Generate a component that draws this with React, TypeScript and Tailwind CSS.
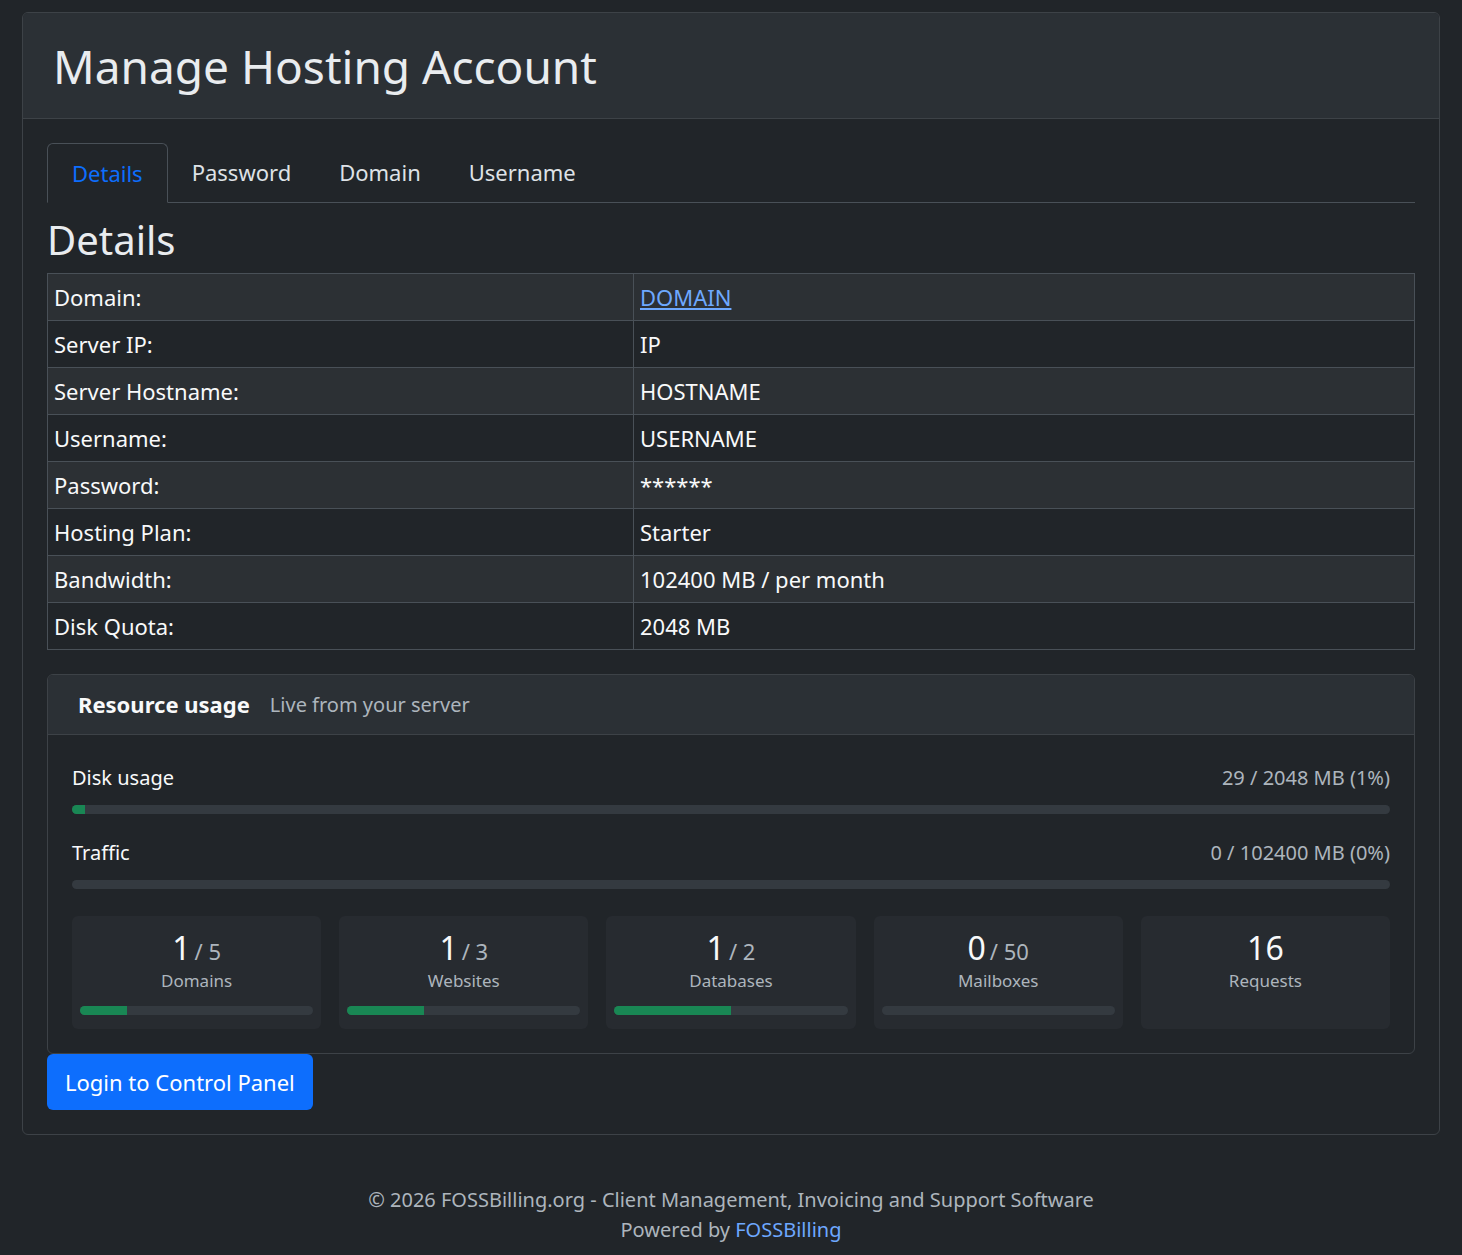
const rows: [string, string][] = [
  ["Domain:", "DOMAIN"],
  ["Server IP:", "IP"],
  ["Server Hostname:", "HOSTNAME"],
  ["Username:", "USERNAME"],
  ["Password:", "******"],
  ["Hosting Plan:", "Starter"],
  ["Bandwidth:", "102400 MB / per month"],
  ["Disk Quota:", "2048 MB"],
];

const stats = [
  { used: "1", total: "/ 5", label: "Domains", pct: 20 },
  { used: "1", total: "/ 3", label: "Websites", pct: 33 },
  { used: "1", total: "/ 2", label: "Databases", pct: 50 },
  { used: "0", total: "/ 50", label: "Mailboxes", pct: 0 },
  { used: "16", total: "", label: "Requests", pct: -1 },
];

const App = () => {
  return (
    <div className="min-h-[1255px] bg-[#212529] text-[#dee2e6] pt-3 pb-4" style={{ fontFamily: '"Noto Sans", "Open Sans", sans-serif' }}>
      <div className="mx-[22px] border border-[#3d4247] rounded-md overflow-hidden">
        <div className="bg-[#2b3035] border-b border-[#3d4247] h-[106px] flex items-center px-[30px]">
          <h1 className="text-[46px] text-[#e9ecef] leading-none">Manage Hosting Account</h1>
        </div>
        <div className="px-6 pt-6 pb-6">
          <div className="flex border-b border-[#495057] h-[60px] items-end text-[22px]">
            <div className="border border-[#495057] border-b-[#212529] -mb-px rounded-t-md px-6 h-[60px] flex items-center text-[#0d6efd]">Details</div>
            <div className="px-6 h-[60px] flex items-center">Password</div>
            <div className="px-6 h-[60px] flex items-center">Domain</div>
            <div className="px-6 h-[60px] flex items-center">Username</div>
          </div>
          <h2 className="text-[40px] mt-3 mb-2 leading-tight text-[#e9ecef]">Details</h2>
          <table className="w-full border-collapse text-[22px] text-[#f8f9fa]">
            <tbody>
              {rows.map(([k, v], i) => (
                <tr key={k} className={i % 2 === 0 ? "bg-[#2c3034]" : ""}>
                  <td className="border border-[#495057] px-[6px] h-[47px] w-[586px]">{k}</td>
                  <td className="border border-[#495057] px-[6px] h-[47px]">
                    {i === 0 ? <a className="text-[#6ea8fe] underline">{v}</a> : v}
                  </td>
                </tr>
              ))}
            </tbody>
          </table>
          <div className="mt-6 border border-[#3d4247] rounded-md overflow-hidden">
            <div className="bg-[#2b3035] border-b border-[#3d4247] h-[60px] flex items-center px-[30px] gap-5">
              <span className="text-[22px] font-bold text-[#f8f9fa]">Resource usage</span>
              <span className="text-[20px] text-[#adb5bd]">Live from your server</span>
            </div>
            <div className="px-6 pt-7 pb-6">
              <div className="flex justify-between text-[20px]">
                <span className="text-[#f8f9fa]">Disk usage</span>
                <span className="text-[#adb5bd]">29 / 2048 MB (1%)</span>
              </div>
              <div className="mt-3 h-[9px] rounded-full bg-[#343a40] overflow-hidden">
                <div className="h-full w-[1%] bg-[#198754]" />
              </div>
              <div className="flex justify-between text-[20px] mt-6">
                <span className="text-[#f8f9fa]">Traffic</span>
                <span className="text-[#adb5bd]">0 / 102400 MB (0%)</span>
              </div>
              <div className="mt-3 h-[9px] rounded-full bg-[#343a40]" />
              <div className="grid grid-cols-5 gap-[18px] mt-[27px]">
                {stats.map((s) => (
                  <div key={s.label} className="bg-[#272b30] rounded-md h-[113px] px-2 pt-4 flex flex-col items-center">
                    <div className="leading-none">
                      <span className="text-[32px] text-[#f8f9fa]">{s.used}</span>
                      {s.total && <span className="text-[22px] text-[#adb5bd] ml-1">{s.total}</span>}
                    </div>
                    <div className="text-[17px] text-[#adb5bd] mt-1">{s.label}</div>
                    {s.pct >= 0 && (
                      <div className="mt-3 w-full h-[9px] rounded-full bg-[#343a40] overflow-hidden">
                        <div className="h-full bg-[#198754]" style={{ width: `${s.pct}%` }} />
                      </div>
                    )}
                  </div>
                ))}
              </div>
            </div>
          </div>
          <button className="bg-[#0d6efd] text-white text-[22px] rounded-md px-[18px] h-[56px]">Login to Control Panel</button>
        </div>
      </div>
      <div className="text-center text-[20px] text-[#adb5bd] mt-[50px] leading-[30px]">
        <div>© 2026 FOSSBilling.org - Client Management, Invoicing and Support Software</div>
        <div>Powered by <a className="text-[#6ea8fe]">FOSSBilling</a></div>
      </div>
    </div>
  );
};

export default App;
